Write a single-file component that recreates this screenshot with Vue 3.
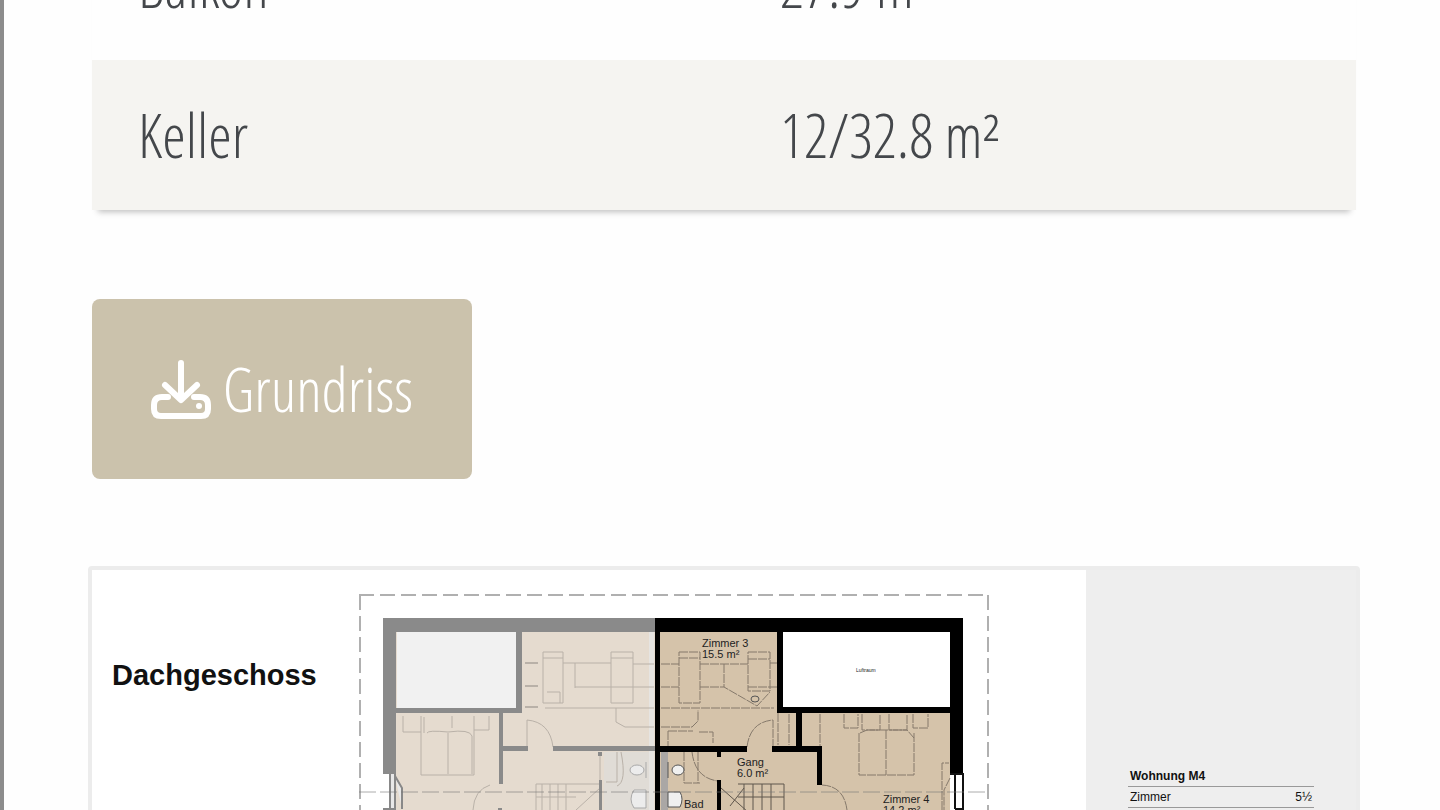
<script setup>
const rooms = [
  { label: 'Balkon', area: '27.9 m²' },
  { label: 'Keller', area: '12/32.8 m²' }
]

const flat = {
  name: 'Wohnung M4',
  facts: [{ label: 'Zimmer', value: '5½' }]
}
</script>

<template>
  <main class="page">
    <table class="rooms">
      <tbody>
        <tr v-for="room in rooms" :key="room.label">
          <th scope="row">{{ room.label }}</th>
          <td>{{ room.area }}</td>
        </tr>
      </tbody>
    </table>

    <a class="download" href="#grundriss">
      <svg class="download-icon" viewBox="0 0 60 60" aria-hidden="true">
        <path d="M17 38H11Q3 38 3 46V50Q3 57 10 57H50Q57 57 57 50V46Q57 38 49 38H43" />
        <path d="M30 4V40M14 26L30 41L46 26" />
        <circle cx="48" cy="47" r="3" />
      </svg>
      <span>Grundriss</span>
    </a>

    <section id="grundriss" class="plan">
      <div class="plan-sheet">
        <h2 class="plan-title">Dachgeschoss</h2>
        <svg class="plan-drawing" viewBox="356 570 640 280" role="img" aria-label="Dachgeschoss">
          <!-- roof outline -->
          <g class="outline">
            <path d="M359 595H988" />
            <path d="M360 595V850" />
            <path d="M988 595V850" />
          </g>

          <!-- neighbouring flat -->
          <rect class="floor-pale" x="396" y="632" width="259" height="218" />
          <rect x="397" y="632" width="120" height="76" fill="#f1f1f1" />
          <rect x="604" y="752" width="50" height="98" fill="#e0dcd6" />
          <rect x="649" y="632" width="5" height="218" fill="#e6e4e1" />
          <g class="lines-pale">
            <path d="M421 716V775H474V716M448 733V774M427 733Q428 730 448 732Q470 729 472 736V774M403 716V732H421M474 730H489V716M452 716V728M424 717V733" />
            <path d="M543 652H563V703H543ZM563 663H611M575 663V688M575 687H654M545 708H654M611 652H633V703H611ZM633 664H654M543 658H563M611 658H633M616 708V722L625 727H654M547 692H560V703" />
            <path d="M525 663H538M525 686H538M525 707H538" stroke-width="2" />
            <path d="M527 747V720Q550 722 553 747M617 752V782H606M621 752Q627 782 617 786" />
            <path d="M536 784H600M536 784V850M542 784V850M550 784V850M558 784V850M566 784V850M536 797H576M576 810L600 788M600 752V780M473 810Q474 790 490 785" />
          </g>
          <g fill="#ececec" stroke="#a9a9a9">
            <ellipse cx="637" cy="770" rx="7" ry="5" />
            <path d="M646 762V778M634 790H646V808H634Q628 799 634 790Z" />
          </g>
          <g class="walls-pale">
            <path d="M383 618H655V632H396V774H383Z" />
            <path d="M516 632H522V713H396V708H516Z" />
            <path d="M499 713H503V746H528V751H503V784H499Z" />
            <path d="M553 746H655V751H553Z" />
            <path d="M599 780H602V850H599ZM598 752H602V756H598Z" />
            <path d="M498 808H502V850H498Z" />
          </g>
          <path d="M390 774V809H395V774M395 776L402 788V809M383 809H395" fill="#e8e8e8" stroke="#888" stroke-width="2" />

          <!-- flat M4 -->
          <rect class="floor" x="657" y="632" width="293" height="218" />
          <rect x="783" y="632" width="168" height="76" fill="#fff" />
          <rect x="661" y="752" width="7" height="98" fill="#aaa7a5" />
          <g class="lines">
            <path d="M679 652H700V703H679ZM679 658H700M661 664H679M661 687H679M700 664H748M724 664V687M700 687H724L757 706L770 692M748 652H770V691H748ZM770 663H778M770 687H778M748 659H770M748 687H770M661 708H774M661 727H692L698 721V710M668 731H693M699 732H713V743M668 731V746" />
            <path d="M747 747Q750 722 773 720V747M692 752Q695 778 718 781M684 752V783H700M698 752V783" />
            <path d="M859 733V775H914V733M886 730V775M860 733L867 730H907L914 738M844 714V728H858V714M862 714V730H880V714M889 714V730H907V714M913 714V728H928V714M820 714V746M778 713V745M789 714V745" />
            <path d="M822 785Q844 786 847 810M942 810V763H949M950 778L944 790V810" />
          </g>
          <g class="stairs">
            <path d="M738 784H784V850M738 797H784M744 784V850M753 784V850M762 784V850M771 784V850M721 788L748 812M730 806L744 788" />
          </g>
          <g fill="#f0f0ef" stroke="#555">
            <ellipse cx="678" cy="770" rx="6" ry="5" />
            <path d="M668 762V778M668 792H680Q684 799 680 807H668Z" />
            <ellipse cx="755" cy="699" rx="4" ry="3" fill="none" />
          </g>
          <g class="walls">
            <path d="M655 618H963V775H950V632H655Z" />
            <path d="M655 618H660V850H655Z" />
            <path d="M777 632H783V707H950V713H802V746H822V785H817V752H772V746H796V713H777Z" />
            <path d="M660 746H747V752H660Z" />
            <path d="M717 752H721V757H717ZM717 780H721V850H717Z" />
          </g>
          <path d="M955 775V809M963 775V809M950 774H964M955 809H964" fill="none" stroke="#111" stroke-width="2" />
          <path class="section-line" d="M359 792H988" />

          <text x="702" y="647">Zimmer 3</text>
          <text x="702" y="658">15.5 m²</text>
          <text x="737" y="766">Gang</text>
          <text x="737" y="777">6.0 m²</text>
          <text x="684" y="808">Bad</text>
          <text x="883" y="803">Zimmer 4</text>
          <text x="883" y="814">14.2 m²</text>
          <text class="tiny" x="856" y="672">Luftraum</text>
        </svg>
      </div>

      <aside class="plan-info">
        <table class="facts">
          <thead>
            <tr>
              <th colspan="2">{{ flat.name }}</th>
            </tr>
          </thead>
          <tbody>
            <tr v-for="fact in flat.facts" :key="fact.label">
              <td>{{ fact.label }}</td>
              <td>{{ fact.value }}</td>
            </tr>
          </tbody>
        </table>
      </aside>
    </section>
  </main>
</template>

<style>
body {
  background: #fefefe;
}
</style>

<style scoped>
.page {
  box-sizing: border-box;
  height: 100vh;
  overflow: hidden;
  padding: 0 80px 0 84px;
  border-left: 4px solid #8c8c8c;
  font-family: 'Open Sans Condensed Light', 'Open Sans Light Condensed', 'OpenSans-CondensedLight', 'Open Sans Condensed', sans-serif;
  font-weight: 300;
  color: #44474b;
}

.rooms {
  width: calc(100% - 8px);
  margin: -90px 4px 0;
  border-collapse: collapse;
  table-layout: fixed;
  font-size: 60px;
  line-height: 80px;
  box-shadow: 0 8px 6px -6px rgba(0, 0, 0, 0.25);
}

.rooms th,
.rooms td {
  height: 150px;
  padding: 0 46px;
  font-weight: 300;
  text-align: left;
  white-space: nowrap;
}

.rooms th {
  width: 50%;
  box-sizing: border-box;
}

.rooms td {
  padding-left: 56px;
}

.rooms tr:nth-child(even) {
  background: #f5f4f1;
}

.download {
  display: flex;
  align-items: center;
  justify-content: center;
  gap: 12px;
  box-sizing: border-box;
  width: 380px;
  height: 180px;
  margin: 89px 4px 87px;
  border-radius: 8px;
  background: #cbc2ac;
  color: #fff;
  font-size: 60px;
  line-height: 80px;
  text-decoration: none;
}

.download-icon {
  flex: none;
  width: 60px;
  height: 60px;
  fill: none;
  stroke: #fff;
  stroke-width: 6;
  stroke-linecap: round;
  stroke-linejoin: round;
}

.download-icon circle {
  fill: #fff;
  stroke: none;
}

.plan {
  display: grid;
  grid-template-columns: 1fr 270px;
  border: 4px solid #ececec;
  border-radius: 4px;
  background: #fff;
  font-family: 'Liberation Sans', Arial, sans-serif;
  font-weight: 400;
  color: #111;
}

.plan-sheet {
  display: flex;
  align-items: flex-start;
}

.plan-title {
  flex: 0 0 264px;
  box-sizing: border-box;
  margin: 0;
  padding: 88px 0 0 20px;
  font-size: 29px;
  line-height: 34px;
  font-weight: 700;
}

.plan-drawing {
  flex: none;
  width: 640px;
  height: 280px;
}

.outline path {
  fill: none;
  stroke: #b0b0b0;
  stroke-width: 2;
  stroke-dasharray: 15 6;
}

.section-line {
  stroke: #777;
  stroke-opacity: 0.6;
  stroke-dasharray: 17 4;
}

.floor-pale {
  fill: #e5dbcf;
}

.floor {
  fill: #d5c3aa;
}

.walls-pale {
  fill: #8a8a8a;
}

.walls {
  fill: #000;
}

.lines-pale {
  fill: none;
  stroke: #b9b1a8;
}

.lines {
  fill: none;
  stroke: #85796b;
  stroke-dasharray: 9 1;
}

.stairs {
  fill: none;
  stroke: #5f564c;
}

.plan-drawing text {
  font-size: 11px;
  fill: #222;
}

.plan-drawing .tiny {
  font-size: 5px;
}

.plan-info {
  padding: 196px 42px 0;
  background: #eee;
}

.facts {
  width: 100%;
  border-collapse: collapse;
  font-size: 12px;
  line-height: 20px;
}

.facts th,
.facts td {
  padding: 0 2px;
  border-bottom: 1px solid #999;
  text-align: left;
}

.facts td:last-child {
  text-align: right;
}
</style>
